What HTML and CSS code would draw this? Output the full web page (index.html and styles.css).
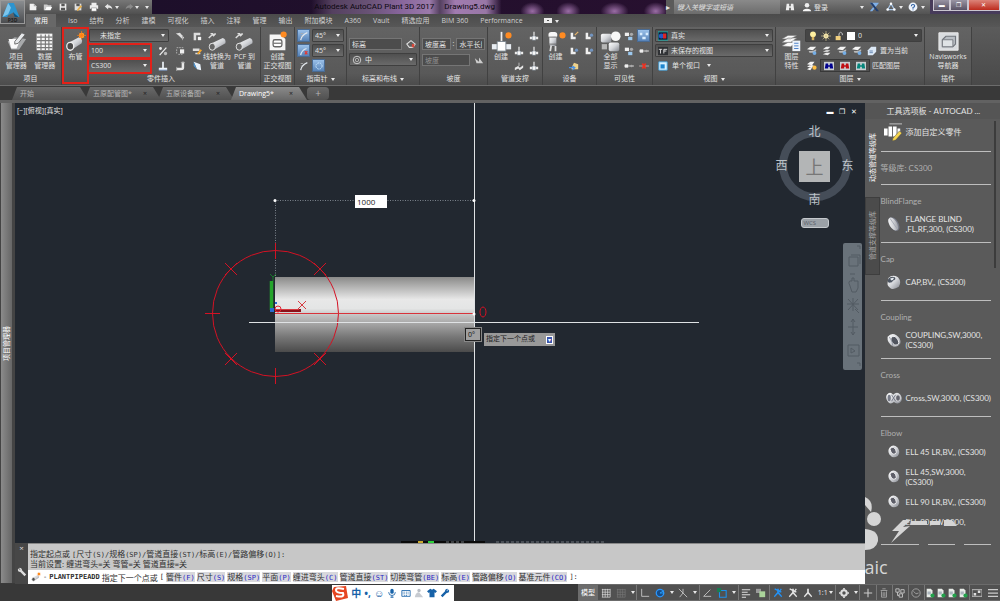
FILE: index.html
```html
<!DOCTYPE html>
<html lang="zh-CN">
<head>
<meta charset="utf-8">
<title>Autodesk AutoCAD Plant 3D 2017 Drawing5.dwg</title>
<link rel="stylesheet" href="styles.css">
</head>
<body>
<svg class="defs" aria-hidden="true">
  <defs>
    <linearGradient id="metal" x1="0" y1="0" x2="1" y2="1"><stop offset="0" stop-color="#fff"/><stop offset=".5" stop-color="#d4d6da"/><stop offset="1" stop-color="#84878f"/></linearGradient>
    <linearGradient id="pipe" x1="0" y1="0" x2="0" y2="1"><stop offset="0" stop-color="#8a8a89"/><stop offset=".3" stop-color="#e8e8e8"/><stop offset=".42" stop-color="#e4e5e5"/><stop offset=".52" stop-color="#c0c0c0"/><stop offset=".8" stop-color="#777"/><stop offset="1" stop-color="#4b4b4b"/></linearGradient>
  </defs>
  <symbol id="new" viewBox="0 0 12 12"><path d="M2 2h5l3 3v5H2z" fill="#f2f2f2"/><path d="M7 2v3h3" fill="#aaa"/></symbol>
  <symbol id="open" viewBox="0 0 12 12"><path d="M1 3h4l1 1h4v2H4l-2 4H1z" fill="#ccc"/><path d="M4 6h7l-2 4H2z" fill="#fff"/></symbol>
  <symbol id="save" viewBox="0 0 12 12"><path d="M2 2h8v8H2z" fill="#eee"/><path d="M4 2h4v3H4zM3.500 7h5v3h-5z" fill="#555"/></symbol>
  <symbol id="saveas" viewBox="0 0 12 12"><path d="M2 2h8v8H2z" fill="#ddd"/><path d="M4 2h4v3H4z" fill="#555"/><path d="M5 9l4-5 2 1-4 5-2 1z" fill="#e8b04c"/></symbol>
  <symbol id="print" viewBox="0 0 12 12"><path d="M3 1h6v3H3zM1 4h10v4H1z" fill="#eee"/><path d="M3 7h6v4H3z" fill="#fff" stroke="#777" stroke-width=".6"/></symbol>
  <symbol id="undo" viewBox="0 0 12 12"><path d="M5 2L1 5.500 5 9V7c3-.5 4 .5 5 2 0-3-2-5-5-5z" fill="#e6e6e6"/></symbol>
  <symbol id="redo" viewBox="0 0 12 12"><path d="M7 2l4 3.500L7 9V7C4 6.500 3 7.500 2 9c0-3 2-5 5-5z" fill="#8a8a8a"/></symbol>
  <symbol id="manager" viewBox="0 0 24 24"><path d="M2 12l8-5 13 2-8 12H6z" fill="#a7a9ab"/><path d="M3 9h10l2 4-3 7H6z" fill="#fafafa"/><path d="M10 12L18 2l4 2-8 10-4 1z" fill="#e6e8ea" stroke="#606060"/></symbol>
  <symbol id="table" viewBox="0 0 24 24"><path d="M3 3h18v19H3z" fill="#f5f5f5"/><path d="M3 7h18M3 11h18M3 15h18M3 19h18M8 4v18M13 4v18M17 4v18" stroke="#777" stroke-width="1.300"/></symbol>
  <symbol id="route" viewBox="0 0 24 24"><path d="M3 14L16 7q5 1 3 7L8 21z" fill="url(#metal)"/><ellipse cx="6" cy="17.500" rx="4" ry="4.500" fill="#4b4b4b" stroke="#eee" stroke-width="1.500"/><circle cx="19" cy="5" r="3" fill="#ffa12b"/><path d="M19 0v10M14 5h10M16 2l6 6M22 2l-6 6" stroke="#ff7a12" stroke-width=".9"/></symbol>
  <symbol id="convert" viewBox="0 0 24 24"><path d="M3 15L18 8q4 1 3 6L7 22z" fill="url(#metal)"/><ellipse cx="6" cy="18" rx="3.500" ry="4" fill="#666" stroke="#eee"/><path d="M2 8q3-4 8-5M4 3h3M7 6L10 3" fill="none" stroke="#ddd" stroke-width="1.500"/></symbol>
  <symbol id="ortho" viewBox="0 0 24 24"><path d="M3 4h13l5 5v13H3z" fill="#f5f5f5"/><rect x="7" y="10" width="10" height="8" rx="2" fill="#fff" stroke="#666" stroke-width="1.500"/><path d="M7 14h10" stroke="#777" stroke-width="1.500"/><circle cx="19" cy="4" r="3.500" fill="#ff8b22"/></symbol>
  <symbol id="support" viewBox="0 0 24 24"><path d="M11 1h2v14h-2z" fill="#eee"/><path d="M1 15h22v6H1z" fill="#e9eef3"/><path d="M7 12h10v11H7z" fill="#fff" stroke="#76818c"/><circle cx="20" cy="5" r="3.500" fill="#ff8b22"/></symbol>
  <symbol id="equip" viewBox="0 0 24 24"><rect x="4" y="1" width="10" height="7" rx="3" fill="#f8f8f8"/><rect x="5" y="6" width="8" height="11" rx="2" fill="url(#metal)"/><path d="M4 7h10M4 15h10" stroke="#666"/><path d="M7 17l-1 6M12 17v6" stroke="#ddd" stroke-width="2"/><circle cx="20" cy="5" r="3.500" fill="#ff8b22"/></symbol>
  <symbol id="visible" viewBox="0 0 24 24"><rect x="1" y="3" width="12" height="10" rx="2" fill="url(#metal)"/><circle cx="18" cy="6" r="5.500" fill="#f8f8f8"/><rect x="10" y="13" width="12" height="10" rx="2" fill="url(#metal)"/><path d="M2 15h6v6H2z" fill="#b6b6b6"/></symbol>
  <symbol id="layers" viewBox="0 0 24 24"><path d="M1 13l7-5h10l-7 5zM1 9l7-4h10l-7 4zM1 17l7-4h9l-6 5z" fill="#fafafa" stroke="#777" stroke-width=".6"/><path d="M13 11h9v12h-9z" fill="#eef3fa"/><path d="M15 14h5M15 17h5M15 20h5" stroke="#3974c4"/></symbol>
  <symbol id="navis" viewBox="0 0 24 24"><path d="M1 2h22v20H1z" fill="#d9dcdf" stroke="#eee"/><path d="M5 10l4-4h11v9l-3 3H5z" fill="#b9bec4" stroke="#70757c" stroke-width="1.300"/><path d="M5 10h12v8H5z" fill="#dfe3e6" stroke="#70757c"/></symbol>
  <symbol id="valve" viewBox="0 0 12 12"><path d="M1 3l5-1 5 6-2 2-5-5z" fill="#ddd"/><path d="M9 5v6" stroke="#aaa"/></symbol>
  <symbol id="flagd" viewBox="0 0 12 12"><path d="M2 11V2h8v3H5v6z" fill="#ddd"/><path d="M7 7h4v4H7z" fill="#f3f3f3"/></symbol>
  <symbol id="percent" viewBox="0 0 12 12"><path d="M2 11l8-9" stroke="#eee" stroke-width="1.500"/><circle cx="3" cy="3" r="1.700" fill="#eee"/><circle cx="9" cy="9" r="2" fill="#bbb"/></symbol>
  <symbol id="copyp" viewBox="0 0 12 12"><path d="M2 2h8M2 4v6M4 10h6" stroke="#bbb" stroke-dasharray="2 1"/><path d="M6 4h5v5H6z" fill="#eee"/></symbol>
  <symbol id="editp" viewBox="0 0 12 12"><path d="M1 3h8v3H1zM4 8h6v2H4z" fill="#ddd"/><path d="M6 9l4-5 2 1-4 5z" fill="#f6a72b"/></symbol>
  <symbol id="tee" viewBox="0 0 12 12"><path d="M5 1h2v7h4v3H1V8h4z" fill="#eff5fb"/><path d="M1 11h10" stroke="#68b"/></symbol>
  <symbol id="elbow" viewBox="0 0 12 12"><path d="M8 1h3v7q0 3-4 3H2V8h6z" fill="#e8e8e8"/><path d="M2 7v5M7 2h5" stroke="#aaa"/></symbol>
  <symbol id="blade" viewBox="0 0 12 12"><path d="M2 1l8 3 1 7-5-1z" fill="#e9f2fa"/><path d="M2 1l4 9-4-4z" fill="#4b95d4"/></symbol>
  <symbol id="arc" viewBox="0 0 12 12"><path d="M2 11Q3 5 10 2" fill="none" stroke="#e2e7ec" stroke-width="1.500"/><path d="M2 3h3M2 6h2" stroke="#aaa"/></symbol>
  <symbol id="arcx" viewBox="0 0 12 12"><path d="M2 11Q3 5 9 3" fill="none" stroke="#dde8f2" stroke-width="1.500"/><path d="M7 6l3 4M10 6l-3 4" stroke="#e23b35" stroke-width="1.500"/></symbol>
  <symbol id="ring" viewBox="0 0 12 12"><circle cx="6" cy="6" r="3.700" fill="none" stroke="#c8e6ff" stroke-width="1.200" stroke-dasharray="2 1"/></symbol>
  <symbol id="lift" viewBox="0 0 12 12"><path d="M1 6l5-4 5 4-3 4H4z" fill="none" stroke="#ddd" stroke-width="1.300"/><path d="M7 6h3v4H7z" fill="#d6483a"/></symbol>
  <symbol id="center" viewBox="0 0 12 12"><circle cx="6" cy="6" r="4.500" fill="none" stroke="#ddd"/><circle cx="6" cy="6" r="2" fill="none" stroke="#bbb"/></symbol>
  <symbol id="slope" viewBox="0 0 12 12"><path d="M1 4l5 4V3l5 7H3z" fill="#ccc"/></symbol>
  <symbol id="sup1" viewBox="0 0 12 12"><path d="M5.300 1h1.400v6H11v3H1V7h4.300z" fill="#eee"/><path d="M4 6h4v5H4z" fill="#f8f8f8" stroke="#678" stroke-width=".5"/></symbol>
  <symbol id="sup2" viewBox="0 0 12 12"><path d="M1 8l4-2 2 2 4-3v3L7 11 5 9l-4 2z" fill="#e6e6e6"/><path d="M6 2v4" stroke="#ccc"/></symbol>
  <symbol id="eq1" viewBox="0 0 12 12"><path d="M2 2h3v5h3v3H2z" fill="#f0f0f0"/><path d="M7 5l4-4" stroke="#e5b36a" stroke-width="1.500"/></symbol>
  <symbol id="eq2" viewBox="0 0 12 12"><path d="M2 2h3v5h3v3H2z" fill="#f0f0f0"/><circle cx="9" cy="5" r="2" fill="#7294bf"/></symbol>
  <symbol id="eq3" viewBox="0 0 12 12"><path d="M3 8l3-6 5 2v6H3z" fill="#efd28b"/><path d="M0 8h6M4 6l3 2-3 3" stroke="#4b91e2" stroke-width="1.500" fill="none"/></symbol>
  <symbol id="vis1" viewBox="0 0 12 12"><path d="M1 2h5v4H1z" fill="#eee"/><circle cx="9" cy="4" r="2" fill="#aaa"/><path d="M5 7h5v4H5z" fill="#9cc8ee"/></symbol>
  <symbol id="vis2" viewBox="0 0 12 12"><path d="M0 6h12" stroke="#ddd"/><path d="M1 4h4v4H1z" fill="#eee"/><circle cx="9" cy="6" r="1.500" fill="#aaa"/></symbol>
  <symbol id="vis3" viewBox="0 0 12 12"><path d="M0 6h12" stroke="#baa"/><path d="M4 3l4 6M8 3l-4 6" stroke="#ee3020" stroke-width="2"/></symbol>
  <symbol id="vis4" viewBox="0 0 12 12"><path d="M1 2h3v3H1zM8 2h3v3H8zM4 7h4v3H4z" fill="#d9edff"/></symbol>
  <symbol id="real" viewBox="0 0 12 12"><path d="M0 1h12v10H0z" fill="#101a35"/><path d="M0 1h12v10H0z" fill="none" stroke="#22b8b1"/><circle cx="4" cy="6" r="3" fill="#2458c4"/><path d="M6 3h4v6H6z" fill="#db2626"/></symbol>
  <symbol id="vname" viewBox="0 0 12 12"><path d="M0 1h12v10H0z" fill="#303235"/><path d="M1 4h4M3 4v5M7 9V4h4M7 6h3" fill="none" stroke="#eee"/></symbol>
  <symbol id="vport" viewBox="0 0 12 12"><path d="M1 1h10v10H1z" fill="#d9f1ff" stroke="#41a6e4"/><path d="M3 4h5v5H3z" fill="#1d86cf"/></symbol>
  <symbol id="bulb" viewBox="0 0 12 12"><circle cx="6" cy="4" r="3.500" fill="#fff0a0"/><path d="M4.500 7h3v4h-3z" fill="#d7b25c"/></symbol>
  <symbol id="sun" viewBox="0 0 12 12"><circle cx="6" cy="6" r="3" fill="#fff0b6"/><path d="M6 0v12M0 6h12M2 2l8 8M10 2l-8 8" stroke="#d7c991" stroke-width=".8"/></symbol>
  <symbol id="lock" viewBox="0 0 12 12"><path d="M2 6h6v5H2z" fill="#f0cf7e"/><path d="M6 6V3q2-3 4 0v2" fill="none" stroke="#ddd"/></symbol>
  <symbol id="lay" viewBox="0 0 12 12"><path d="M0 4l4-3h7L7 5z" fill="#f5f5f5"/><path d="M2 6h5l4-2v2L8 8H3z" fill="#bbb"/><circle cx="9" cy="8.500" r="2.300" fill="#75aee6"/></symbol>
  <symbol id="laystack" viewBox="0 0 12 12"><path d="M1 4l4-3h5L7 4zM1 7l4-2h5L7 7zM1 10l4-2h5l-3 3z" fill="#eee"/></symbol>
  <symbol id="laysun" viewBox="0 0 12 12"><path d="M0 4l4-3h5L6 5zM0 7l3-2h5L6 8zM0 10l3-2h3l-2 3z" fill="#f5f5f5"/><circle cx="9" cy="8" r="2.500" fill="#fdbd43"/></symbol>
  <symbol id="laydoc" viewBox="0 0 12 12"><path d="M1 5l4-4h6v6l-4 4H1z" fill="#dce8f5"/><path d="M3 6h4M3 8h4" stroke="#557aa8"/></symbol>
  <symbol id="bino" viewBox="0 0 12 12"><path d="M0 1h12v10H0z" fill="#c9ced2"/><path d="M2 3h3v2h2V3h3l1 6H7V7H5v2H1z" fill="currentColor"/></symbol>
  <symbol id="find" viewBox="0 0 12 12"><path d="M2 2h3v3h2V2h3l1 8H7V7H5v3H1z" fill="#eee"/></symbol>
  <symbol id="user" viewBox="0 0 12 12"><circle cx="6" cy="4" r="2.700" fill="#eee"/><path d="M1 11q0-3 5-3t5 3z" fill="#f6f6f6"/></symbol>
  <symbol id="xlogo" viewBox="0 0 12 12"><path d="M1 1l4 5-4 5h3l8-10H9z" fill="#7fb0e8"/><path d="M4 1l8 10H9L1 1z" fill="#223d6b"/></symbol>
  <symbol id="a360" viewBox="0 0 12 12"><path d="M6 2l4 7H2z" fill="none" stroke="#a5c4e6" stroke-width="1.500"/><circle cx="6" cy="2" r="1.500" fill="#fff"/><circle cx="2" cy="9" r="1.500" fill="#fff"/><circle cx="10" cy="9" r="1.500" fill="#fff"/></symbol>
  <symbol id="help" viewBox="0 0 12 12"><circle cx="6" cy="6" r="5.300" fill="#eef4fb"/><path d="M4 5q0-2 2-2t2 1.500Q8 6 6 6.500V8M6 9v1" fill="none" stroke="#2c5fa3" stroke-width="1.300"/></symbol>
  <symbol id="wrench" viewBox="0 0 12 12"><path d="M3 1L1 3q0 3 3 3l5 5 2-2-5-5q0-3-3-3l1 2-1 1z" fill="currentColor"/></symbol>
  <symbol id="flange" viewBox="0 0 20 20"><ellipse cx="10" cy="10" rx="5.500" ry="9.500" transform="rotate(-32 10 10)" fill="#777b88"/><ellipse cx="9" cy="10" rx="4.800" ry="9" transform="rotate(-32 9 10)" fill="url(#metal)"/><path d="M5 3l9 13" stroke="#9ea2af"/></symbol>
  <symbol id="cap" viewBox="0 0 20 20"><path d="M3 5Q8 0 15 4q5 6 1 12-6 4-10 2-5-3-4-7z" fill="url(#metal)"/><path d="M3 6q3-4 8-2 2 3-2 4-1 3-5 3-3-1-1-5z" fill="#4c5460"/><path d="M5 6q4-2 5-1-1 3-3 3z" fill="#e8edf2"/></symbol>
  <symbol id="coupling" viewBox="0 0 20 20"><path d="M2 6Q7 0 13 4q6 4 5 10-4 6-9 4-8-4-7-12z" fill="url(#metal)"/><ellipse cx="11" cy="11" rx="4" ry="6" transform="rotate(-32 11 11)" fill="#50545e" stroke="#fff"/><path d="M4 6q5 8 4 11" stroke="#858b99" fill="none"/></symbol>
  <symbol id="cross" viewBox="0 0 20 20"><path d="M1 6q4-5 8 0 5-5 9 0 4 6-1 10-4 2-7-1-5 4-8-1-3-4-1-8z" fill="url(#metal)"/><ellipse cx="4" cy="10" rx="2" ry="4" fill="#777b88"/><ellipse cx="15" cy="10" rx="3" ry="4" fill="#62636d" stroke="#eee"/><path d="M7 6l5 8M12 6l-5 8" stroke="#666a78"/></symbol>
  <symbol id="ell" viewBox="0 0 20 20"><path d="M4 5q5-6 11 0 4 6 0 11-7 4-11-2-3-5 0-9z" fill="url(#metal)"/><ellipse cx="9" cy="9" rx="3.500" ry="5" transform="rotate(-30 9 9)" fill="#5d5e68" stroke="#fff"/></symbol>
  <symbol id="addpart" viewBox="0 0 20 20"><path d="M6 1h14" stroke="#ccc"/><path d="M0 6h4v8H0zM5 4h4v11H5zM10 4h4v11h-4zM15 6h3v7h-3z" fill="#fff"/><path d="M10 17l7-8 3 2-7 8-4 1z" fill="#f4d34c" stroke="#444" stroke-width=".5"/></symbol>
  <symbol id="gridi" viewBox="0 0 12 12"><path d="M1 2h10M1 5h10M1 8h10M2 1v10M5 1v10M8 1v10M11 1v10M1 11h10" stroke="currentColor" stroke-width=".8"/></symbol>
  <symbol id="orthoi" viewBox="0 0 12 12"><path d="M2 1v9h9" fill="none" stroke="#ccc"/></symbol>
  <symbol id="polar" viewBox="0 0 12 12"><circle cx="6" cy="6" r="4.500" fill="#164d8a" stroke="#2997ff" stroke-width="1.500"/><path d="M6 6l5-3M6 6h5" stroke="#2da2ff"/></symbol>
  <symbol id="iso" viewBox="0 0 12 12"><path d="M1 1l10 10M6 1v5L2 11" stroke="#ccc" fill="none"/></symbol>
  <symbol id="track" viewBox="0 0 12 12"><path d="M10 2L2 10h9" fill="none" stroke="#ccc"/></symbol>
  <symbol id="osnap" viewBox="0 0 12 12"><path d="M3 3h8v8H3z" fill="none" stroke="#1c91ed" stroke-width="1.300"/><path d="M0 0h5v5H0z" fill="#197d51"/></symbol>
  <symbol id="lines" viewBox="0 0 12 12"><path d="M1 2h10M1 5h7M1 8h10M1 11h5" stroke="#ddd" stroke-width="1.300"/></symbol>
  <symbol id="trans" viewBox="0 0 12 12"><path d="M0 1h6v5H0z" fill="#999"/><path d="M4 4h7v7H4z" fill="#aad49b"/></symbol>
  <symbol id="person" viewBox="0 0 12 12"><path d="M5 1h2v4l4 5-1 1-4-4-4 4-1-1 4-5z" fill="currentColor"/></symbol>
  <symbol id="personx" viewBox="0 0 12 12"><path d="M5 1h2v4l4 5-1 1-4-4-4 4-1-1 4-5z" fill="currentColor"/><path d="M2 1l8 4M10 1L7 5" stroke="currentColor" stroke-width="1.500"/></symbol>
  <symbol id="gear" viewBox="0 0 12 12"><circle cx="6" cy="6" r="3.300" fill="none" stroke="#ddd" stroke-width="2.500"/><path d="M6 0v2M6 10v2M0 6h2M10 6h2" stroke="#ddd" stroke-width="2"/></symbol>
  <symbol id="plus" viewBox="0 0 12 12"><path d="M6 1v10M1 6h10" stroke="#ccc" stroke-width="1.300"/></symbol>
  <symbol id="trash" viewBox="0 0 12 12"><path d="M2 3h8M3 4v7h6V4M5 5v5M7 5v5M4 1h4" fill="none" stroke="#aaa"/></symbol>
  <symbol id="boxes" viewBox="0 0 12 12"><path d="M1 1h4v4H1zM7 2h4v4H7zM5 7h4v4H5zM3 5v4h2" fill="none" stroke="#ccc"/></symbol>
  <symbol id="circ" viewBox="0 0 12 12"><circle cx="6" cy="6" r="5" fill="none" stroke="#aaa"/><path d="M3 4l3 3 3-1" fill="none" stroke="#aaa"/></symbol>
  <symbol id="docg" viewBox="0 0 12 12"><path d="M2 1h5l2 2v8H2z" fill="#e8ece8"/><path d="M3 5h4M3 7h4" stroke="#789"/><circle cx="9" cy="9" r="2.500" fill="#22a24b"/></symbol>
  <symbol id="full" viewBox="0 0 12 12"><path d="M0 2h12v8H0z" fill="none" stroke="#ccc"/><path d="M2 6h3v3H2zM7 3h3v3H7z" fill="#ddd"/></symbol>
  <symbol id="menu" viewBox="0 0 12 12"><path d="M0 2h12M0 6h12M0 10h12" stroke="#ccc" stroke-width="1.500"/></symbol>
</svg>

<header class="top">
  <button class="app" aria-label="应用程序菜单"><svg viewBox="1 1 20 17"><path d="M2 17L8 2h6l6 15h-4l-2-5-6 3-1 2z" fill="#2d94cf"/><path d="M8 2l3 5-3 7-6 3z" fill="#7cc5ec"/><path d="M13 12l6 5h-4z" fill="#0b5685"/></svg><span>P3D</span></button>
  <div class="titlebar">
    <div class="quick">
      <button aria-label="新建"><svg><use href="#new"/></svg></button><button aria-label="打开"><svg><use href="#open"/></svg></button><button aria-label="保存"><svg><use href="#save"/></svg></button><button aria-label="另存为"><svg><use href="#saveas"/></svg></button><button aria-label="打印"><svg><use href="#print"/></svg></button><button class="drop" aria-label="放弃"><svg><use href="#undo"/></svg></button><button class="drop" aria-label="重做"><svg><use href="#redo"/></svg></button><button class="drop" aria-label="自定义"></button>
    </div>
    <div class="caption"><span>Autodesk AutoCAD Plant 3D 2017</span><span>Drawing5.dwg</span></div>
    <div class="search"><span>▸</span><input aria-label="搜索" placeholder="键入关键字或短语"></div>
    <div class="account"><button aria-label="查找"><svg><use href="#find"/></svg></button><button><svg><use href="#user"/></svg>登录</button><i></i><button class="drop" aria-label="登录菜单"></button><button aria-label="Exchange"><svg><use href="#xlogo"/></svg></button><button class="drop" aria-label="A360"><svg><use href="#a360"/></svg></button><button class="drop" aria-label="帮助"><svg><use href="#help"/></svg></button></div>
    <div class="win"><button aria-label="最小化">▬</button><button aria-label="还原">❐</button><button class="close" aria-label="关闭">✕</button></div>
  </div>
  <nav class="menu">
    <button class="on">常用</button><button>Iso</button><button>结构</button><button>分析</button><button>建模</button><button>可视化</button><button>插入</button><button>注释</button><button>管理</button><button>输出</button><button>附加模块</button><button>A360</button><button>Vault</button><button>精选应用</button><button>BIM 360</button><button>Performance</button><button class="drop rec" aria-label="功能区显示"><b></b></button>
  </nav>
</header>

<section class="ribbon">
  <div class="panel">
    <div class="tools"><button class="big"><svg><use href="#manager"/></svg>项目<br>管理器</button><button class="big"><svg><use href="#table"/></svg>数据<br>管理器</button></div><h2>项目</h2>
  </div>
  <div class="panel">
    <div class="tools">
      <button class="big marked"><svg><use href="#route"/></svg>布管</button>
      <div class="rows loose grow">
        <div><span class="combo grow"><select class="indent" aria-label="线号"><option>未指定</option></select></span><button><svg><use href="#valve"/></svg></button><button><svg><use href="#flagd"/></svg></button></div>
        <div><span class="combo grow framed"><select aria-label="管道尺寸"><option>100</option></select></span><button><svg><use href="#percent"/></svg></button><button><svg><use href="#copyp"/></svg></button><button><svg><use href="#editp"/></svg></button></div>
        <div><span class="combo grow framed"><select aria-label="等级库"><option>CS300</option></select></span><button><svg><use href="#tee"/></svg></button><button><svg><use href="#elbow"/></svg></button><button><svg><use href="#blade"/></svg></button></div>
      </div>
      <button class="big"><svg><use href="#convert"/></svg>线转换为<br>管道</button><button class="big"><svg><use href="#convert"/></svg>PCF 到<br>管道</button>
    </div><h2>零件插入</h2>
  </div>
  <div class="panel"><div class="tools"><button class="big"><svg><use href="#ortho"/></svg>创建<br>正交视图</button></div><h2>正交视图</h2></div>
  <div class="panel"><div class="tools"><div class="rows grow">
    <div><button class="lit"><svg><use href="#arc"/></svg></button><span class="combo grow"><select aria-label="角度"><option>45°</option></select></span></div>
    <div><button class="lit"><svg><use href="#arcx"/></svg></button><span class="combo grow"><select aria-label="公差"><option>45°</option></select></span></div>
    <div><button><svg><use href="#arc"/></svg></button><button class="lit"><svg><use href="#ring"/></svg></button></div>
  </div></div><h2 class="drop">指南针</h2></div>
  <div class="panel"><div class="tools"><div class="rows two grow">
    <div><input class="grow" aria-label="标高" value="标高"><button><svg><use href="#lift"/></svg></button></div>
    <div><span class="combo grow"><svg><use href="#center"/></svg><select aria-label="布线"><option>中</option></select></span></div>
  </div></div><h2 class="drop">标高和布线</h2></div>
  <div class="panel"><div class="tools"><div class="rows two grow">
    <div><input class="grow" aria-label="坡度高" value="坡度高">:<input class="grow" aria-label="水平长度" value="水平长度"></div>
    <div><input class="grow" aria-label="坡度" value="坡度" disabled><button><svg><use href="#slope"/></svg></button></div>
  </div></div><h2>坡度</h2></div>
  <div class="panel"><div class="tools tight"><button class="big"><svg><use href="#support"/></svg>创建</button><div class="rows end">
    <div><button><svg><use href="#sup1"/></svg></button></div>
    <div><button><svg><use href="#sup1"/></svg></button><button><svg><use href="#sup1"/></svg></button></div>
    <div><button><svg><use href="#sup2"/></svg></button><button><svg><use href="#sup1"/></svg></button></div>
  </div></div><h2>管道支撑</h2></div>
  <div class="panel"><div class="tools tight"><button class="big"><svg><use href="#equip"/></svg>创建</button><div class="rows">
    <div><button><svg><use href="#eq1"/></svg></button><button><svg><use href="#eq2"/></svg></button></div>
    <div><button><svg><use href="#eq2"/></svg></button><button><svg><use href="#eq2"/></svg></button></div>
    <div><button><svg><use href="#eq3"/></svg></button></div>
  </div></div><h2>设备</h2></div>
  <div class="panel"><div class="tools tight"><button class="big"><svg><use href="#visible"/></svg>全部<br>显示</button><div class="rows">
    <div><button><svg><use href="#vis1"/></svg></button><button class="lit"><svg><use href="#vis4"/></svg></button></div>
    <div><button><svg><use href="#vis1"/></svg></button><button><svg><use href="#vis2"/></svg></button></div>
    <div><button><svg><use href="#vis2"/></svg></button><button><svg><use href="#vis3"/></svg></button></div>
  </div></div><h2>可见性</h2></div>
  <div class="panel"><div class="tools"><div class="rows grow">
    <div><span class="combo grow"><svg><use href="#real"/></svg><select aria-label="视觉样式"><option>真实</option></select></span></div>
    <div><span class="combo grow"><svg><use href="#vname"/></svg><select aria-label="视图"><option>未保存的视图</option></select></span></div>
    <div><button class="drop wide"><svg><use href="#vport"/></svg>单个视口</button></div>
  </div></div><h2 class="drop">视图</h2></div>
  <div class="panel"><div class="tools"><button class="big"><svg><use href="#layers"/></svg>图层<br>特性</button><div class="rows grow">
    <div><span class="combo grow dark"><svg><use href="#bulb"/></svg><svg><use href="#sun"/></svg><svg><use href="#lock"/></svg><b class="swatch"></b><select aria-label="图层"><option>0</option></select></span></div>
    <div><button><svg><use href="#lay"/></svg></button><button><svg><use href="#laystack"/></svg></button><button><svg><use href="#lay"/></svg></button><button><svg><use href="#lay"/></svg></button><button><svg><use href="#laydoc"/></svg></button><button class="near">置为当前</button></div>
    <div><button><svg><use href="#laysun"/></svg></button><span class="float"><button class="navy"><svg><use href="#bino"/></svg></button><button class="red"><svg><use href="#bino"/></svg></button><button class="teal"><svg><use href="#bino"/></svg></button></span><button class="near">匹配图层</button></div>
  </div></div><h2 class="drop">图层</h2></div>
  <div class="panel"><div class="tools"><button class="big"><svg><use href="#navis"/></svg>Navisworks<br>导航器</button></div><h2>插件</h2></div>
</section>

<nav class="files">
  <button>开始</button><button>五原配管图* <i>×</i></button><button>五原设备图* <i>×</i></button><button class="on">Drawing5* <i>×</i></button><button class="add" aria-label="新图形">+</button>
</nav>

<div class="main">
  <aside class="rail"><span>项目管理器</span></aside>
  <main>
    <div class="canvas">
      <svg class="drawing" viewBox="15 103 850 440" preserveAspectRatio="xMinYMin slice">
        <path d="M275 277h199v75H275z" fill="url(#pipe)"/>
        <path d="M275.500 200v77M275 200.500h199" stroke="#7b828b" stroke-dasharray="1 1.500"/>
        <g fill="none" stroke="#d41224"><circle cx="275.500" cy="313.500" r="63"/><path d="M275.500 243v16M275.500 368v16M205 313.500h15M225 263l12 12M237 263l-12 12M314 263l12 12M326 263l-12 12M225 353l12 12M237 353l-12 12M314 353l12 12M326 353l-12 12"/><ellipse cx="483" cy="312" rx="3" ry="5"/></g>
        <path d="M275 313.500h199" stroke="#d8323a"/>
        <path d="M271.500 310V281" stroke="#25a52c" stroke-width="3.500"/><path d="M270 274l3 3 3-3M273 277v4" stroke="#18752a" fill="none"/>
        <path d="M275 310.500h26" stroke="#8c1018" stroke-width="3"/><path d="M275 309.500h24M298 301l8 8M306 301l-8 8" stroke="#d63a40"/>
        <circle cx="278" cy="309" r="3" fill="none" stroke="#e02434"/><path d="M270 308h4v4h-4zM275 302h2v2h-2z" fill="#286ad0"/>
        <path d="M249 322.500h450M474.500 103v440" stroke="#dfe2e4"/>
        <g fill="#fff"><circle cx="275" cy="200.500" r="1.500"/><circle cx="474" cy="200.500" r="1.500"/><circle cx="474" cy="314" r="1.500"/></g>
        <path d="M401 542h84" stroke="#0a0a0a" stroke-width="2"/><path d="M418 542h5" stroke="#cba92c" stroke-width="2"/><path d="M428 542h6" stroke="#2bd23a" stroke-width="2"/><path d="M446 542h20M496 542h110" stroke="#71777c" stroke-dasharray="3 2"/>
      </svg>
      <div class="viewlabel">[−][俯视][真实]</div>
      <div class="viewwin"><button aria-label="最小化视口">▬</button><button aria-label="还原视口">❐</button><button aria-label="关闭视口">✕</button></div>
      <input class="length" aria-label="长度" value="1000">
      <div class="angle">0°</div>
      <div class="prompt">指定下一个点或<button aria-label="选项">▾</button></div>
      <div class="compass"><span>北</span><span>西</span><b>上</b><span>东</span><span>南</span></div>
      <button class="wcs">WCS</button>
      <div class="navbar"><svg viewBox="0 0 19 127" fill="none" stroke="#535b63"><path d="M14 3h3v3M6 14h9v9H6zM8 12h9v9M7 31h5M7 43q-3-6 2-5v-3h2v3h4v7l-2 4H9zM5 56l10 11M15 56L5 67M10 55v13M4 61h12M12 66l4 4M10 76v16M5 84h10M8 79l2-3 2 3M8 89l2 3 2-3M5 102h11v11H5zM8 105v5l4-2zM14 120h3v3"/></svg></div>
    </div>
    <div class="command">
      <div class="grip"><span>×</span><svg><use href="#wrench"/></svg></div>
      <div class="history"><div>指定起点或 <kbd>[</kbd>尺寸<kbd>(S)/</kbd>规格<kbd>(SP)/</kbd>管道直接<kbd>(ST)/</kbd>标高<kbd>(E)/</kbd>管路偏移<kbd>(O)]:</kbd></div><div>当前设置: 缠进弯头<kbd>=</kbd>关 弯管<kbd>=</kbd>关 管道直接<kbd>=</kbd>关</div></div>
      <div class="entry"><svg><use href="#route"/></svg><kbd>-</kbd> <kbd class="cmd">PLANTPIPEADD</kbd> 指定下一个点或 <kbd>[</kbd><button>管件<kbd>(F)</kbd></button><button>尺寸<kbd>(S)</kbd></button><button>规格<kbd>(SP)</kbd></button><button>平面<kbd>(P)</kbd></button><button>缠进弯头<kbd>(C)</kbd></button><button>管道直接<kbd>(ST)</kbd></button><button>切换弯管<kbd>(BE)</kbd></button><button>标高<kbd>(E)</kbd></button><button>管路偏移<kbd>(O)</kbd></button><button>基准元件<kbd>(CO)</kbd></button><kbd>]:</kbd></div>
    </div>
  </main>
  <aside class="palette">
    <h1>工具选项板 - AUTOCAD ...</h1>
    <div class="side"><button class="on">动态管道等级库</button><button>管道支撑等级库</button></div>
    <div class="list">
      <section class="first"><button><svg><use href="#addpart"/></svg>添加自定义零件</button></section>
      <section class="spec"><h3>等级库: CS300</h3></section>
      <section><h3>BlindFlange</h3><button><svg><use href="#flange"/></svg><span>FLANGE BLIND<br>,FL,RF,300, (CS300)</span></button></section>
      <section><h3>Cap</h3><button><svg><use href="#cap"/></svg>CAP,BV,, (CS300)</button></section>
      <section><h3>Coupling</h3><button><svg><use href="#coupling"/></svg><span>COUPLING,SW,3000,<br>(CS300)</span></button></section>
      <section><h3>Cross</h3><button><svg><use href="#cross"/></svg>Cross,SW,3000, (CS300)</button></section>
      <section class="last"><h3>Elbow</h3><button><svg><use href="#ell"/></svg>ELL 45 LR,BV,, (CS300)</button><button><svg><use href="#ell"/></svg><span>ELL 45,SW,3000,<br>(CS300)</span></button><button><svg><use href="#ell"/></svg>ELL 90 LR,BV,, (CS300)</button><button class="cut"><i></i>ELL 90,SW,3000,</button></section>
    </div>
    <div class="brand"><svg viewBox="0 0 110 60"><g fill="#d5d5d5"><path d="M0 0q9 4 6 15L0 8z"/><circle cx="9" cy="22" r="7"/><path d="M0 32q14 1 13 12-2 9-13 9z"/><path d="M38 23L27 34h7l-8 12 19-17-7 1 8-7zM46 24h16v4H45zM65 24h10v4H65zM79 23h8l5 6H79z"/></g></svg><span>aic</span></div>
  </aside>
</div>

<footer class="status">
  <div class="ime"><svg class="sogou" viewBox="0 0 16 16"><path d="M2 2l12-1 2 12-12 3L0 6z" fill="#e64622"/><path d="M12 4q-8-2-8 1t7 3q2 5-7 3" fill="none" stroke="#fff" stroke-width="2"/></svg><span>中</span><span>•,</span><span>☺</span>
    <svg viewBox="0 0 12 12"><rect x="4" y="1" width="4" height="6" rx="2" fill="#1762a8"/><path d="M2 5q0 4 4 4t4-4M6 9v3M4 11h4" fill="none" stroke="#1762a8"/></svg>
    <svg viewBox="0 0 12 12"><path d="M1 3h10v7H1z" fill="none" stroke="#1762a8"/><path d="M2 5h8M2 7h8M4 9h4" stroke="#1762a8" stroke-dasharray="1 1"/></svg>
    <svg viewBox="0 0 12 12"><circle cx="6" cy="3" r="2" fill="#b8bdc4"/><path d="M1 11q1-6 5-6l5 6z" fill="#c7cbd1"/></svg>
    <svg viewBox="0 0 12 12"><path d="M4 1q2 2 4 0l4 3-2 2-1-1v6H3V5L2 6 0 4z" fill="#1762a8"/></svg>
    <svg class="flip"><use href="#wrench"/></svg></div>
  <div class="tray">
    <button class="txt model">模型</button><button><svg><use href="#gridi"/></svg></button><button class="dim"><svg><use href="#gridi"/></svg></button><button class="drop" aria-label="捕捉"></button><button class="sep"><svg><use href="#orthoi"/></svg></button><button><svg><use href="#polar"/></svg></button><button class="drop" aria-label="极轴"></button><button><svg><use href="#iso"/></svg></button><button class="drop" aria-label="等轴测"></button><button class="sep"><svg><use href="#track"/></svg></button><button><svg><use href="#osnap"/></svg></button><button class="drop" aria-label="对象捕捉"></button><button class="sep"><svg><use href="#lines"/></svg></button><button><svg><use href="#trans"/></svg></button><button class="sep blue"><svg><use href="#personx"/></svg></button><button><svg><use href="#personx"/></svg></button><button><svg><use href="#person"/></svg></button><button class="txt drop">1:1</button><button class="sep"><svg><use href="#gear"/></svg></button><button class="drop" aria-label="工作空间"></button><button class="sep"><svg><use href="#plus"/></svg></button><button class="sep"><svg><use href="#trash"/></svg></button><button class="sep"><svg><use href="#boxes"/></svg></button><button class="sep"><svg><use href="#circ"/></svg></button><button class="sep slim"><svg><use href="#docg"/></svg></button><button class="slim"><svg><use href="#docg"/></svg></button><button class="slim"><svg><use href="#docg"/></svg></button><button class="slim"><svg><use href="#docg"/></svg></button><button class="sep"><svg><use href="#full"/></svg></button><button><svg><use href="#menu"/></svg></button>
  </div>
</footer>
</body>
</html>
```
FILE: styles.css
```css
*, *::before { box-sizing: border-box; }
body {
  margin: 0;
  min-height: 100vh;
  display: flex;
  flex-direction: column;
  overflow: hidden;
  background: #3a3a3a;
  color: #e4e4e4;
  font: 7px/9px "Open Sans", "Noto Sans CJK SC", sans-serif;
}
button, input, select, kbd { font: inherit; color: inherit; }
button { margin: 0; padding: 0; border: 0; background: none; white-space: nowrap; }
input { min-width: 0; margin: 0; }
h1, h2, h3 { margin: 0; font: inherit; }
svg { width: 10px; height: 10px; flex: none; display: block; }
i { font-style: normal; }
.defs { position: absolute; width: 0; height: 0; }
.grow { flex: 1; min-width: 0; }
.drop::after {
  content: "";
  flex: none;
  display: inline-block;
  margin-left: 3px;
  border: 2px solid transparent;
  border-top: 3px solid #e8e8e8;
  border-bottom: 0;
}

/* title bar and ribbon tabs */
.top { display: grid; grid-template-columns: 25px 1fr; grid-template-rows: 14px 13px; background: #505050; }
.app {
  grid-row: 1 / 3;
  margin-bottom: 3px;
  border: 1px solid #999;
  background: linear-gradient(#8a8d90, #4b4d50);
  color: #222;
  font-size: 5px;
  line-height: 5px;
  font-weight: bold;
}
.app svg { width: 20px; height: 16px; }
.app span { display: block; }
.titlebar { display: flex; min-width: 0; background: #1e0d2b; }
.quick { flex: 0 0 127px; display: flex; align-items: center; justify-content: space-around; background: linear-gradient(#777, #505050); }
.quick button, .account button { display: flex; align-items: center; }
.quick .drop::after { margin-left: 1px; }
.caption {
  flex: 1;
  display: flex;
  justify-content: flex-end;
  gap: 10px;
  padding: 2px 171px 0 0;
  color: #0c0810;
  font: 8px/10px Roboto, sans-serif;
  white-space: nowrap;
  background:
    radial-gradient(ellipse 12px 9px at 74% 80%, #9a6ea5, transparent),
    radial-gradient(ellipse 12px 9px at 81% 80%, #9a6ea5, transparent),
    radial-gradient(ellipse 14px 9px at 90% 80%, #9a6ea5, transparent),
    radial-gradient(ellipse 12px 9px at 98% 80%, #9a6ea5, transparent),
    linear-gradient(90deg, transparent 31%, #54405f 35%, #685275 42%, #86649a 48%, #9b7aab 54%, #54405f 56%, #a17bb0 59%, #9877a6 65%, transparent 68%),
    linear-gradient(90deg, #1d0f2a, #27102f);
}
.search { flex: 0 0 114px; display: flex; background: #777; }
.search span { width: 8px; font-size: 8px; line-height: 14px; background: #5b5b5b; }
.search input { flex: 1; border: 0; padding: 0 3px; background: linear-gradient(#8a8a8a, #6c6c6c); }
.search ::placeholder { color: #e0e0e0; font-style: italic; }
.account { flex: 0 0 150px; display: flex; align-items: center; gap: 5px; padding: 0 5px; background: linear-gradient(#787878, #535353); }
.account i { flex: 1; }
.account svg { margin-right: 2px; }
.account .drop::after { margin-left: 1px; }
.win { flex: 0 0 70px; display: flex; padding: 0 0 3px 3px; background: #473b5a; }
.win button { flex: 1; border: 1px solid #c9c5d0; border-top: 0; background: linear-gradient(#9994a3, #595265); color: #fff; font-size: 6px; line-height: 8px; }
.win .close { flex: 2; background: linear-gradient(#dc8479, #bd2b1d); }
.menu { display: flex; gap: 12px; padding-left: 1px; align-items: stretch; background: linear-gradient(#4b4b4b, #575757); }
.menu button { color: #d0d0d0; line-height: 13px; }
.menu .on { padding: 0 8px; background: #686868; color: #fff; }
.menu .rec { padding-left: 9px; }
.rec b { display: inline-block; width: 8px; height: 5px; border: 2px solid #eee; border-width: 2px 3px; }

/* ribbon panels */
.ribbon {
  display: grid;
  grid-template-columns: 62fr 199fr 34fr 52fr 73fr 68fr 55fr 54fr 56fr 123fr 149fr 47fr 28fr;
  background: linear-gradient(#5b5b5b, #494949);
  border-bottom: 1px solid #6c6c6c;
}
.panel { display: flex; flex-direction: column; min-width: 0; padding-top: 2px; border-right: 1px solid #414141; background: linear-gradient(#636363, #595959 80%, #4c4c4c); }
.tools { display: flex; height: 43px; padding: 0 2px; justify-content: space-around; }
.tools.tight { padding: 0; justify-content: center; }
.panel h2 { height: 13px; line-height: 14px; text-align: center; white-space: nowrap; }
.big { position: relative; display: flex; flex-direction: column; align-items: center; justify-content: flex-start; min-width: 27px; padding-top: 2px; text-align: center; }
.big svg { width: 21px; height: 21px; }
.tight .big { min-width: 23px; }
.big.marked { margin: -2px 0 -12px -2px; padding-top: 2px; border: 2px solid #e32119; z-index: 1; }
.rows { display: flex; flex-direction: column; gap: 2px; }
.rows.two { padding-top: 8px; gap: 3px; }
.rows > div { display: flex; gap: 2px; height: 13px; align-items: center; }
.rows.loose > div { gap: 4px; }
.rows.end > div { justify-content: flex-end; }
.rows button { display: flex; align-items: center; justify-content: center; min-width: 13px; height: 13px; }
.rows .wide { padding: 0 3px; gap: 4px; }
.rows .lit { background: linear-gradient(#9bc1ea, #5682b7); border: 1px solid #496a92; }
.rows input { height: 12px; padding: 0 2px; border: 1px solid #757575; background: #4c4c4c; }
.rows input:disabled { color: #929292; }
.combo { position: relative; display: flex; align-items: center; height: 13px; border: 1px solid #3f3f3f; border-radius: 1px; background: linear-gradient(#4f4f4f, #6a6a6a); padding-left: 2px; gap: 3px; }
.combo::after { content: ""; position: absolute; right: 3px; top: 4px; border: 2px solid transparent; border-top: 3px solid #eee; border-bottom: 0; pointer-events: none; }
.combo select { appearance: none; flex: 1; min-width: 0; width: 100%; border: 0; padding: 0; background: none; }
.combo .indent { padding-left: 8px; }
.combo.framed { height: 16px; margin: -1px 0 -1px -2px; border: 2px solid #e32119; }
.combo.dark { background: #454545; }
.swatch { width: 8px; height: 8px; background: #fff; flex: none; }
.float { display: flex; align-items: center; justify-content: space-around; width: 50px; height: 13px; border: 1px solid #383838; background: #505050; }
.navy { color: #00008f; }
.red { color: #c00d12; }
.teal { color: #04857b; }

/* drawing tabs */
.files { display: flex; height: 17px; padding-left: 12px; align-items: flex-end; border-bottom: 3px solid #626262; background: #393939; }
.files button { flex: 0 0 76px; height: 13px; margin-right: -3px; padding: 0 8px; text-align: left; color: #b5b5b5; background: linear-gradient(#696969, #505050); clip-path: polygon(5px 0, 68px 0, 100% 100%, 0 100%); display: flex; justify-content: space-between; align-items: center; }
.files i { padding-right: 6px; color: #222; }
.files .on { background: linear-gradient(#8a8a8a, #686868); color: #fff; }
.files .add { flex-basis: 22px; margin-left: 3px; padding: 0; clip-path: none; border-radius: 4px; justify-content: center; font-size: 10px; }

/* work area */
.main { flex: 1; display: flex; min-height: 0; }
.rail { flex: 0 0 15px; display: flex; align-items: center; justify-content: center; margin-bottom: 1px; border-right: 3px solid #444; border-left: 1px solid #444; background: linear-gradient(90deg, #8b8b8b, #666); }
.rail span { writing-mode: vertical-rl; text-orientation: sideways; transform: rotate(180deg); color: #fff; }
main { flex: 1; min-width: 0; display: flex; flex-direction: column; }
.canvas { position: relative; flex: 1; overflow: hidden; background: #222830; }
.drawing { position: absolute; inset: 0; width: 100%; height: 100%; }
.viewlabel { position: absolute; left: 2px; top: 3px; }
.viewwin { position: absolute; right: 7px; top: 4px; display: flex; gap: 5px; color: #fff; }
.viewwin button { width: 7px; font-size: 7px; }
.length { position: absolute; left: 340px; top: 92px; width: 32px; height: 13px; padding: 0 2px; border: 0; background: #fff; color: #222; font-size: 8px; }
.angle { position: absolute; left: 450px; top: 225px; width: 16px; height: 13px; padding: 1px 2px; border: 1px solid #222; outline: 1px solid #888; background: #a0a0a0; color: #111; }
.prompt { position: absolute; left: 469px; top: 230px; width: 71px; height: 13px; display: flex; justify-content: space-between; padding: 1px 2px; background: #999; color: #1c1c1c; }
.prompt button { width: 7px; height: 8px; margin-top: 2px; border: 1px solid #fff; background: #3b55ac; color: #fff; font-size: 6px; line-height: 5px; }
.compass { position: absolute; right: 11px; top: 21px; width: 78px; height: 83px; display: grid; grid-template: 25px 32px 25px / 12px 32px 12px; place-items: center; justify-content: space-between; padding-top: 1px; color: #bcc2c8; font-size: 12px; line-height: 12px; }
.compass::before { content: ""; position: absolute; left: 3px; top: 5px; width: 72px; height: 72px; border: 8px solid #454d58; border-radius: 50%; }
.compass > * { position: relative; }
.compass span:first-child, .compass span:last-child { grid-column: 1 / 4; }
.compass span:first-child { align-self: start; padding-top: 1px; }
.compass span:last-child { align-self: end; padding-bottom: 1px; }
.compass b { width: 31px; height: 31px; background: #b3b5b6; color: #777; font: 18px/30px "Noto Sans CJK SC", sans-serif; text-align: center; }
.wcs { position: absolute; right: 36px; top: 115px; width: 28px; height: 10px; border: 1px solid #c5c9cd; border-radius: 3px; background: #9ba1a7; color: #596067; font-size: 6px; line-height: 7px; text-align: left; padding-left: 2px; }
.navbar { position: absolute; right: 3px; top: 140px; width: 19px; height: 127px; border-radius: 2px; background: #69727a; }
.navbar svg { width: 19px; height: 127px; }

/* command line */
.command { display: grid; grid-template-columns: 13px 1fr; grid-template-rows: 27px 14px; background: #474747; color: #303030; font-size: 8px; line-height: 9px; white-space: nowrap; }
.command kbd { font: 7px/8px "DejaVu Sans Mono", "Liberation Mono", monospace; }
.grip { grid-row: 1 / 3; display: flex; flex-direction: column; align-items: center; justify-content: space-between; padding: 0 0 7px; color: #ddd; }
.history { padding: 5px 2px 0; border-top: 1px solid #888; background: #c7c7c7; }
.history div { height: 10px; }
.entry { display: flex; align-items: center; gap: 2px; padding: 0 3px; background: #fff; }
.command .cmd { font-weight: bold; }
.entry button { background: #d8d8dc; line-height: 10px; }
.entry button kbd { color: #2727c5; }

/* tool palette */
.palette { position: relative; flex: 0 0 135px; display: grid; grid-template-columns: 15px 1fr; grid-template-rows: 16px 1fr; background: #5a5a5a; }
.palette h1 { grid-column: 1 / 3; padding-left: 22px; font: 8px/16px Lato, "Noto Sans CJK SC", sans-serif; background: #555; }
.side { display: flex; flex-direction: column; background: #5a5a5a; }
.side button { writing-mode: vertical-rl; text-orientation: sideways; transform: rotate(180deg); width: 15px; height: 78px; text-align: center; background: #4b4b4b; border: 1px solid #3e3e3e; color: #aaa; }
.side .on { background: #5a5a5a; border-color: #5a5a5a; color: #fff; }
.list { position: relative; padding: 0 9px 0 1px; font: 8px/10px Lato, "Noto Sans CJK SC", sans-serif; }
.list::after { content: ""; position: absolute; right: 4px; top: 2px; width: 2px; height: 147px; background: #3c3c3c; }
.list section { height: 58px; padding-top: 10px; border-bottom: 1px solid #bebebe; }
.list h3 { color: #b0b0b0; line-height: 12px; }
.list button { display: flex; align-items: center; gap: 4px; height: 26px; margin-top: 4px; padding-left: 5px; text-align: left; }
.list svg { width: 16px; height: 18px; }
.list .first { height: 33px; padding: 0; }
.list .first button { margin: 0; padding-left: 3px; }
.list .first svg { width: 18px; }
.list .spec { height: 33px; }
.list .last { height: auto; border: 0; }
.last svg { width: 16px; height: 15px; }
.last button { height: 25px; margin: 0; }
.list .cut { height: 15px; }
.cut i { width: 16px; }
.last::after { content: ""; display: block; height: 1px; margin-top: 15px; background: linear-gradient(90deg, #bebebe 35%, transparent 35% 43%, #bebebe 43% 67%, transparent 67% 75%, #bebebe 75%); }
.brand { position: absolute; left: 0; bottom: 4px; width: 110px; height: 83px; pointer-events: none; color: #d5d5d5; font-size: 18px; line-height: 20px; overflow: hidden; }
.brand svg { width: 110px; height: 60px; }

/* status bar */
.status { position: relative; display: flex; justify-content: flex-end; height: 17px; background: #383838; }
.ime { position: absolute; left: 332px; top: 1px; width: 122px; height: 16px; display: flex; align-items: center; justify-content: space-between; padding-right: 4px; background: #fff; color: #1762a8; font-size: 10px; font-weight: bold; line-height: 12px; }
.ime .sogou { width: 16px; height: 16px; }
.flip { transform: scaleX(-1); }
.tray { flex: 0 0 422px; display: flex; background: #515151; border: 1px solid #6b6b6b; border-width: 1px 0; }
.tray button { flex: 15 0 0; min-width: 0; display: flex; align-items: center; justify-content: center; }
.tray .drop { flex-grow: 8; }
.tray .drop::after { margin-left: 1px; }
.tray .txt { flex-grow: 20; }
.tray .slim { flex-grow: 11; }
.tray .sep { border-left: 1px solid #777; }
.tray .model { background: #6c6c6c; color: #fff; }
.tray .dim { color: #777; }
.tray .blue { color: #2492f5; }
```
